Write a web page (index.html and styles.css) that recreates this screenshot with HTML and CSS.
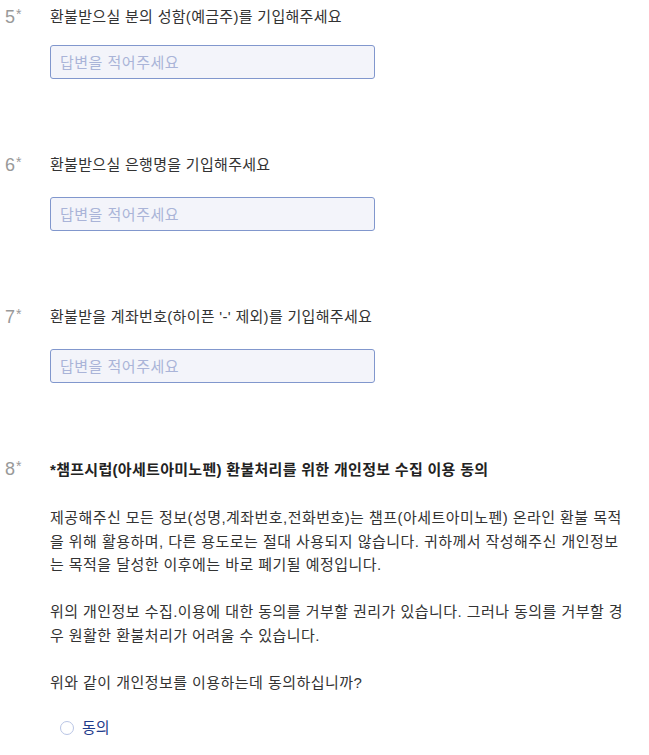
FILE: index.html
```html
<!DOCTYPE html>
<html lang="ko">
<head>
    <meta charset="UTF-8">
    <meta name="viewport" content="width=device-width, initial-scale=1.0">
    <title>환불 신청</title>
    <link rel="stylesheet" href="styles.css">
</head>
<body>
    <div class="form">
        <div class="question">
            <div class="q-num">5<span class="req">*</span></div>
            <div class="q-body">
                <div class="q-title">환불받으실 분의 성함(예금주)를 기입해주세요</div>
                <input type="text" class="answer" placeholder="답변을 적어주세요">
            </div>
        </div>

        <div class="question">
            <div class="q-num">6<span class="req">*</span></div>
            <div class="q-body">
                <div class="q-title">환불받으실 은행명을 기입해주세요</div>
                <input type="text" class="answer" placeholder="답변을 적어주세요">
            </div>
        </div>

        <div class="question">
            <div class="q-num">7<span class="req">*</span></div>
            <div class="q-body">
                <div class="q-title">환불받을 계좌번호(하이픈 '-' 제외)를 기입해주세요</div>
                <input type="text" class="answer" placeholder="답변을 적어주세요">
            </div>
        </div>

        <div class="question">
            <div class="q-num">8<span class="req">*</span></div>
            <div class="q-body">
                <div class="q-title bold">*챔프시럽(아세트아미노펜) 환불처리를 위한 개인정보 수집 이용 동의</div>
                <div class="q-desc">
                    <p>제공해주신 모든 정보(성명,계좌번호,전화번호)는 챔프(아세트아미노펜) 온라인 환불 목적을 위해 활용하며, 다른 용도로는 절대 사용되지 않습니다. 귀하께서 작성해주신 개인정보는 목적을 달성한 이후에는 바로 폐기될 예정입니다.</p>
                    <p>위의 개인정보 수집.이용에 대한 동의를 거부할 권리가 있습니다. 그러나 동의를 거부할 경우 원활한 환불처리가 어려울 수 있습니다.</p>
                    <p>위와 같이 개인정보를 이용하는데 동의하십니까?</p>
                </div>
                <label class="choice">
                    <span class="radio"></span>
                    <span class="choice-text">동의</span>
                </label>
            </div>
        </div>
    </div>
</body>
</html>
```

FILE: styles.css
```css
body {
    margin: 0;
    padding: 0;
    background-color: #fff;
    font-family: "Liberation Sans", "Noto Sans CJK KR", sans-serif;
    color: #333;
}

.form {
    width: 630px;
    padding-top: 6px;
}

.question {
    display: grid;
    grid-template-columns: 50px 1fr;
    margin-bottom: 75px;
}

.question:last-child {
    margin-bottom: 0;
}

.q-num {
    padding-left: 5px;
    font-size: 18px;
    line-height: 22px;
    color: #999;
}

.req {
    font-size: 14px;
    vertical-align: top;
    position: relative;
    top: -3px;
    margin-left: 1px;
}

.q-title {
    font-size: 15px;
    line-height: 22px;
    letter-spacing: 0.3px;
    color: #333;
    margin-bottom: 21px;
}

.question:first-child .q-title {
    margin-bottom: 17px;
}

.q-title.bold {
    font-weight: bold;
    color: #222;
    margin-top: 1px;
    margin-bottom: 25px;
}

.answer {
    display: block;
    box-sizing: border-box;
    width: 325px;
    height: 34px;
    margin: 0;
    padding: 0 9px;
    border: 1px solid #8197cd;
    border-radius: 3px;
    background-color: #f3f4fa;
    font-family: "Liberation Sans", "Noto Sans CJK KR", sans-serif;
    font-size: 15px;
    letter-spacing: 0.5px;
    color: #333;
}

.answer::placeholder {
    color: #aab4d8;
}

.q-desc p {
    margin: 0 0 23.5px;
    font-size: 15px;
    line-height: 23.5px;
    letter-spacing: 0.45px;
    word-break: break-all;
    color: #333;
}

.q-desc p:last-child {
    margin-bottom: 0;
}

.choice {
    display: flex;
    align-items: center;
    gap: 8px;
    padding-left: 10px;
    margin-top: 23px;
}

.radio {
    box-sizing: border-box;
    width: 14px;
    height: 14px;
    border: 1.5px solid #b9c5e5;
    border-radius: 50%;
    background-color: #fff;
}

.choice-text {
    font-size: 15px;
    line-height: 22px;
    color: #1f3c8c;
}
```
